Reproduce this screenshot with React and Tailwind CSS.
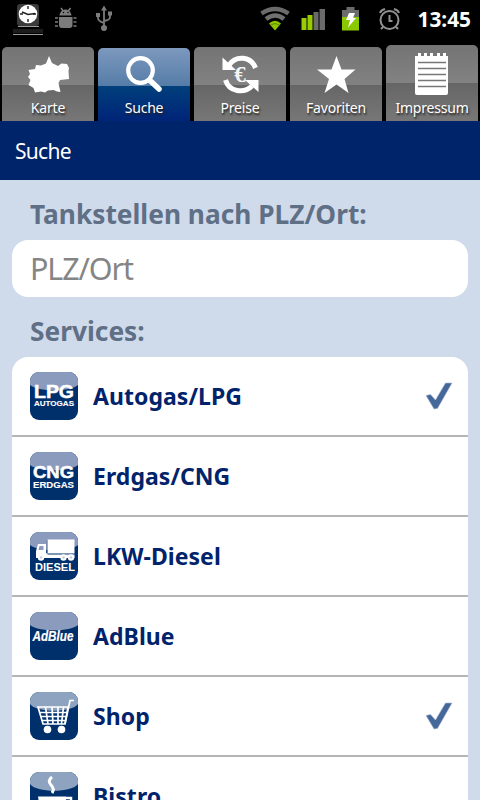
import React from "react";

const LpgArt = () => (
  <g fill="#fff" stroke="#fff" fontFamily="Liberation Sans, sans-serif" fontWeight="bold">
    <text x="4" y="25.500" fontSize="17.500" strokeWidth="0.500" textLength="40" lengthAdjust="spacingAndGlyphs">
      LPG
    </text>
    <text x="4" y="34" fontSize="7" strokeWidth="0.100" textLength="40" lengthAdjust="spacingAndGlyphs">
      AUTOGAS
    </text>
  </g>
);

const CngArt = () => (
  <g fill="#fff" stroke="#fff" fontFamily="Liberation Sans, sans-serif" fontWeight="bold">
    <text x="3" y="25.500" fontSize="17" strokeWidth="0.500" textLength="41" lengthAdjust="spacingAndGlyphs">
      CNG
    </text>
    <text x="3" y="35.500" fontSize="8.500" strokeWidth="0.100" textLength="41" lengthAdjust="spacingAndGlyphs">
      ERDGAS
    </text>
  </g>
);

const TruckArt = () => (
  <g fill="#fff">
    <rect x="17.500" y="7.500" width="27" height="14" />
    <path d="M8 12h8v9h1.500v1.500h27V26H6v-7z" />
    <path d="M9.500 14h4v4h-5z" fill="#8b9bbd" />
    <path d="M17 8v14" stroke="#5d739f" strokeWidth="0.800" />
    <circle cx="11" cy="25.500" r="3.200" />
    <circle cx="33.500" cy="25.500" r="3.200" />
    <circle cx="41" cy="25.500" r="3.200" />
    <g fill="#c5cfe0">
      <circle cx="11" cy="25.500" r="1.200" />
      <circle cx="33.500" cy="25.500" r="1.200" />
      <circle cx="41" cy="25.500" r="1.200" />
    </g>
    <text x="5" y="39" fontSize="10.500" fontWeight="bold" fontFamily="Liberation Sans, sans-serif" textLength="40" lengthAdjust="spacingAndGlyphs">
      DIESEL
    </text>
  </g>
);

const AdBlueArt = () => (
  <text x="2.500" y="29" fill="#fff" stroke="#fff" strokeWidth="0.200" fontSize="15" fontWeight="bold" fontStyle="italic" fontFamily="Liberation Sans, sans-serif" textLength="41" lengthAdjust="spacingAndGlyphs">
    AdBlue
  </text>
);

const CartArt = () => (
  <g fill="none" stroke="#fff" strokeWidth="1.700">
    <path d="M8 15h30l-3 17H13z" />
    <path d="M44 8.500h-4L35 32M10 20.500h27M11 24.500h25M12 28.500h24M15.500 15l2.500 17M22 15l1 17M28 15v17M33.500 15l-2 17" />
    <circle cx="17.500" cy="37.500" r="3.800" fill="#fff" stroke="none" />
    <circle cx="31.500" cy="37.500" r="3.800" fill="#fff" stroke="none" />
  </g>
);

const CupArt = () => (
  <g fill="none" stroke="#fff">
    <path d="M22 5q-5 4-1 8t1 8" strokeWidth="3" />
    <path d="M8 24.500h28v19H11z" fill="#fff" stroke="none" />
    <path d="M36 26h5v8h-5" strokeWidth="2.500" />
  </g>
);

const services = [
  { name: "Autogas/LPG", art: <LpgArt />, checked: true },
  { name: "Erdgas/CNG", art: <CngArt /> },
  { name: "LKW-Diesel", art: <TruckArt /> },
  { name: "AdBlue", art: <AdBlueArt /> },
  { name: "Shop", art: <CartArt />, checked: true, round: true },
  { name: "Bistro", art: <CupArt />, round: true },
];

const ServiceTile = ({ children, round }) => (
  <div className="h-12 w-12 shrink-0 overflow-hidden rounded-[9px] bg-[#00306c]">
    <svg viewBox="0 0 48 48" className="h-12 w-12">
      <path
        d={round ? "M0 0H48V12C42 21 6 21 0 12Z" : "M0 0H48V13C40 20 8 20 0 13Z"}
        fill={round ? "#8ea3bf" : "#8b9bbd"}
      />
      {children}
    </svg>
  </div>
);

const CheckMark = () => (
  <svg viewBox="0 0 28 28" className="h-7 w-7">
    <path d="M0 13.500l4.500-1 5 5.500L19.500 1H26L11.500 26.500 8 27z" fill="#45689b" stroke="#aab9cf" strokeWidth="0.600" />
  </svg>
);

const KarteIcon = () => (
  <svg viewBox="0 0 48 48" className="h-12 w-12" fill="#fff">
    <path d="M25 4L28 11 34 14 37.500 11.500 43 12 45 16 44.500 19 45 27 36 28 34.500 31 36.500 40 33 39.500 29.500 38 24 38.500 21 40.500 17 39.500 11 40.500 9.500 36 4.500 33 6.500 28 4 25 6 22 4.500 18 11 17 12 13 17 13.500 22 11.500Z" />
  </svg>
);

const SucheIcon = () => (
  <svg viewBox="0 0 48 48" className="h-12 w-12" fill="none" stroke="#fff">
    <circle cx="20.500" cy="18.500" r="12.300" strokeWidth="4.200" />
    <path d="M30 28.500l9 8.500" strokeWidth="5.500" strokeLinecap="round" />
  </svg>
);

const PreiseIcon = () => (
  <svg viewBox="0 0 48 48" className="h-12 w-12">
    <g fill="none" stroke="#fff" strokeWidth="5">
      <path d="M13 13C20 3 35 4 39.500 16" />
      <path d="M9.500 28C13 40 28 42 36 34" />
    </g>
    <path d="M6.500 5.500v12.500H20zM42.500 40V28H29z" fill="#fff" />
    <text x="24" y="29.500" textAnchor="middle" fontSize="23" fontWeight="bold" fontFamily="Liberation Serif, serif" fill="#f4f4f4">
      €
    </text>
  </svg>
);

const FavoritenIcon = () => (
  <svg viewBox="0 0 48 48" className="h-12 w-12" fill="#fff">
    <path d="M24.500 4l5 13.500H43.500L32.500 27l4 14-12-8.500L12.500 41l4.500-14L5 17.500h14.500z" />
  </svg>
);

const ImpressumIcon = () => (
  <svg viewBox="0 0 48 48" className="h-12 w-12">
    <path d="M7 4h3V1h3v3h3V1h3v3h3V1h3v3h4V1h3v3h3V1h3v3h2v37a2 2 0 0 1-2 2H9a2 2 0 0 1-2-2z" fill="#fff" />
    <path d="M10 10.500h28M10 16.500h28M10 22.500h28M10 28.500h28M10 34.500h28" stroke="#777" strokeWidth="1.300" />
  </svg>
);

const tabs = [
  { label: "Karte", icon: <KarteIcon /> },
  { label: "Suche", icon: <SucheIcon />, active: true },
  { label: "Preise", icon: <PreiseIcon /> },
  { label: "Favoriten", icon: <FavoritenIcon /> },
  { label: "Impressum", icon: <ImpressumIcon />, tall: true },
];

const StatusBar = () => (
  <div className="flex h-[38px] items-center justify-between pl-3 pr-[9px]">
    <svg viewBox="0 0 108 38" className="h-[38px] w-[108px]">
      <rect x="5" y="4" width="22" height="22" rx="3" fill="#3a3a3a" />
      <circle cx="16" cy="14" r="9.300" fill="#fff" />
      <path d="M10 12l6 2.500 7-1" fill="none" stroke="#222" strokeWidth="1.600" />
      <path d="M16 6v3M16 19v3M8 14h3M21 14h3" stroke="#222" strokeWidth="1.400" />
      <path d="M6 26.500h21M1 34.500h30" stroke="#999" />
      <rect x="1" y="29" width="30" height="4" fill="#1c1c1c" />
      <g fill="#7c7c7c">
        <path d="M47.500 15.500c1-8 11-8 12 0zM47 17h13.500v8q0 3-3 3h-7.500q-3 0-3-3z" />
        <path d="M49 8l3 4M58.500 8l-3 4M43 18h3M43 22h3M43 26h3M61.500 18h3M61.500 22h3M61.500 26h3" stroke="#7c7c7c" strokeWidth="1.600" />
        <path d="M92 5.500l3 5h-6zM84 13h4v4h-4zM96 11.500h4v4h-4z" />
        <circle cx="92" cy="28" r="3" />
      </g>
      <circle cx="51.500" cy="12.500" r="0.700" />
      <circle cx="56" cy="12.500" r="0.700" />
      <path d="M92 8v20M86 15v3q0 3 6 5M98 14v3q0 3-6 4" fill="none" stroke="#7c7c7c" strokeWidth="1.800" />
    </svg>
    <div className="flex items-center">
      <svg viewBox="0 0 150 38" className="h-[38px] w-[150px]">
        <g fill="none" strokeWidth="4.500">
          <path d="M1.500 13.500q13.500-9 27 0" stroke="#6b6b6b" />
          <path d="M6 19q9.500-7 18 0" stroke="#707070" />
        </g>
        <path d="M9 23.500q6-5.500 12 0l-6 7z" fill="#8fc400" />
        <path d="M10.500 25q4.500-3 9 0" fill="none" stroke="#5e8a00" />
        <path d="M41.500 18h5v12h-5zM47.500 15h5v15h-5z" fill="#9c0" />
        <path d="M53.500 12h5v18h-5zM59.500 9h5.500v21h-5.500z" fill="#6b6b6b" />
        <path d="M82 10h4.500V7h8v3H99v7H82z" fill="#6b6b6b" />
        <path d="M82 17h17v13.500H82z" fill="#8ac800" />
        <path d="M89 13h6l-2 5h3l-8 9.500 2-7.500h-4z" fill="#fff" />
        <g fill="none" stroke="#929292" strokeWidth="2">
          <circle cx="129.500" cy="20" r="9" />
          <path d="M120 13q1-3 5-4M139 13q-1-3-5-4M129.500 15v6h3M123 27l-2 2M136 27l2 2" />
        </g>
      </svg>
      <span className="w-[61px] text-right text-[20.800px] font-bold leading-[38px] text-white">13:45</span>
    </div>
  </div>
);

const App = () => {
  return (
    <div className="flex h-[800px] w-[480px] flex-col overflow-hidden bg-[#cfdbeb] font-['Noto_Sans','Open_Sans',sans-serif]">
      <header className="bg-black">
        <StatusBar />
        {/* Tabs */}
        <nav className="flex h-[83px] items-end gap-1 px-0.5">
          {tabs.map(({ label, icon, active, tall }) => (
            <div
              key={label}
              className={`flex w-[92px] flex-col items-center justify-end rounded-t-[5px] ${
                active
                  ? "h-[73px] bg-[linear-gradient(#7d98bd_0px,#557da8_38px,#003f7c_38px,#002478_73px)]"
                  : tall
                    ? "h-[76px] bg-[linear-gradient(#747474_0px,#828282_38px,#666_38px,#777_76px)]"
                    : "h-[74px] bg-[linear-gradient(#747474_0px,#828282_38px,#666_38px,#777_74px)]"
              }`}
            >
              {icon}
              <span className="-mt-1 h-[25px] whitespace-nowrap text-[14px] leading-[24px] tracking-[-0.2px] text-white [text-shadow:1px_2px_2px_#222]">
                {label}
              </span>
            </div>
          ))}
        </nav>
      </header>

      <h1 className="h-[59px] shrink-0 bg-[#002469] pl-[15px] text-[21px] leading-[60px] tracking-[-0.700px] text-white">
        Suche
      </h1>

      <main className="px-3">
        <h2 className="h-[60px] pl-[18px] text-[26.300px] font-bold leading-[68px] text-[#5f6f86]">
          Tankstellen nach PLZ/Ort:
        </h2>
        <input
          placeholder="PLZ/Ort"
          className="block h-[57px] w-full rounded-[16px] bg-white px-[18px] pb-0.5 text-[30.500px] tracking-[-1.100px] text-black outline-none placeholder:text-[#858585]"
        />
        <h2 className="h-[60px] pl-[18px] text-[26.300px] font-bold leading-[68px] text-[#5f6f86]">
          Services:
        </h2>

        {/* Services */}
        <ul className="rounded-t-[16px] bg-white">
          {services.map(({ name, art, checked, round }) => (
            <li key={name} className="flex h-20 items-center border-b-2 border-[#b5b5b5] pl-[18px] pr-[14px]">
              <ServiceTile round={round}>{art}</ServiceTile>
              <span className="ml-[15px] flex-1 text-[23px] font-bold tracking-[0.050px] text-[#00236b]">{name}</span>
              {checked && <CheckMark />}
            </li>
          ))}
        </ul>
      </main>
    </div>
  );
};

export default App;
